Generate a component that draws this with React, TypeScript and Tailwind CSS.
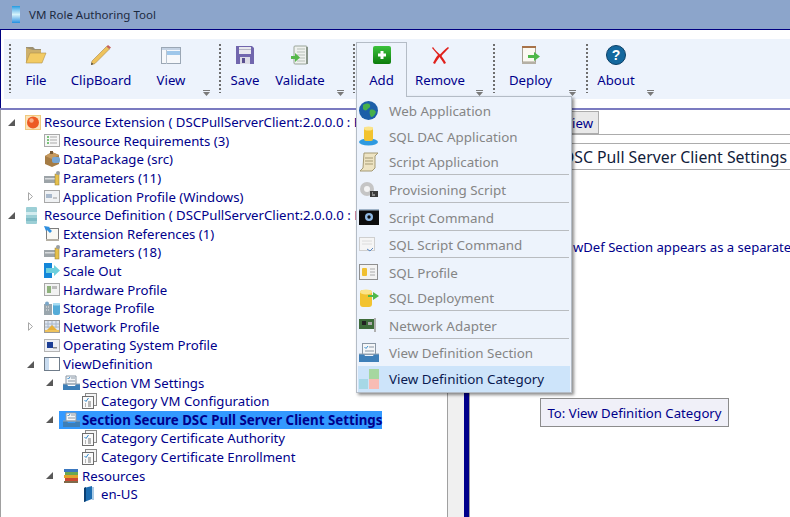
import React from "react";

const F = "font-['Noto_Sans','Open_Sans',sans-serif]";

function Grip() {
  return (
    <div className="w-[2px] h-[49px] mx-[1px] shrink-0 bg-[repeating-linear-gradient(to_bottom,#6e6e6e_0,#6e6e6e_2px,transparent_2px,transparent_4px)]" />
  );
}

function Overflow({ left }: { left: string }) {
  return (
    <svg width="9" height="6" viewBox="0 0 9 6" className={`absolute bottom-[3px] ${left}`}>
      <rect x="1" y="0" width="7" height="1" fill="#7a7a7a" />
      <path d="M1 2h7L4.500 6z" fill="#7a7a7a" />
    </svg>
  );
}

const icons: Record<string, React.ReactNode> = {
  folder: (
    <svg width="22" height="18" viewBox="0 0 22 18">
      <path d="M1 1h7l2 2h6v4H1z" fill="#9c9072" />
      <path d="M1 2v14h15V4H8z" fill="#cdb06c" />
      <path d="M5 7h16l-4 10H1z" fill="#f3cb63" stroke="#b0914c" strokeWidth=".6" />
    </svg>
  ),
  pencil: (
    <svg width="20" height="20" viewBox="0 0 20 20">
      <path d="M0 20l1-4L15.500 1.500 18.500 4 4 18.500z" fill="#eec25c" stroke="#a98a4a" strokeWidth=".6" />
      <path d="M15.500 1.500L17 0l3 2.500L18.500 4z" fill="#c5615c" />
      <path d="M0 20l.6-2.500 1.800 1.600z" fill="#444" />
    </svg>
  ),
  view: (
    <svg width="20" height="17" viewBox="0 0 20 17">
      <rect x=".5" y=".5" width="19" height="16" fill="#f6f8fb" stroke="#9ba7b5" />
      <rect x="1" y="1" width="18" height="2" fill="#c4d2e4" />
      <rect x="6" y="4" width="13" height="4" fill="#9fc7ea" />
      <path d="M5.500 3v14" stroke="#b9c4d0" />
    </svg>
  ),
  save: (
    <svg width="18" height="18" viewBox="0 0 18 18">
      <path d="M0 0h16l2 2v16H0z" fill="#7166ad" />
      <rect x="3" y="1" width="12" height="7" fill="#e8e8ee" />
      <rect x="3" y="3" width="12" height="1" fill="#b5b5c5" />
      <rect x="4" y="11" width="10" height="7" fill="#dcdce6" />
      <rect x="6" y="12" width="3" height="5" fill="#5a5090" />
    </svg>
  ),
  validate: (
    <svg width="18" height="20" viewBox="0 0 18 20">
      <rect x="3" y="1" width="13" height="18" rx="1" fill="#eef1ee" stroke="#9aa59a" />
      <path d="M6 4h8M6 7h8M6 10h8M6 13h8M6 16h8" stroke="#b7bfb7" />
      <path d="M16 2v17" stroke="#8a968a" strokeWidth="2" />
      <path d="M0 11h4V8l5 4.500L4 17v-3H0z" fill="#55b84a" />
    </svg>
  ),
  add: (
    <svg width="18" height="18" viewBox="0 0 18 18">
      <defs>
        <linearGradient id="ga" x1="0" y1="0" x2="0" y2="1">
          <stop offset="0" stopColor="#3cc23c" />
          <stop offset="1" stopColor="#0c7c0c" />
        </linearGradient>
      </defs>
      <rect width="18" height="18" rx="2" fill="url(#ga)" />
      <path d="M7.500 5h3v2.500H13v3h-2.500V13h-3v-2.500H5v-3h2.500z" fill="#fff" />
    </svg>
  ),
  remove: (
    <svg width="17" height="17" viewBox="0 0 17 17">
      <path d="M1 0c2 3 5 6 7 7.500C10 5.500 13 2 16 0l1 1c-3 3-6 6-7.500 8 1.500 2 3.500 5 4.500 7l-2 1C11 15 9 12 7.500 10 6 12 4 15 3 17l-2-1c1-2 3-6 5-8C4 6 2 3 0 1z" fill="#e0211c" />
    </svg>
  ),
  deploy: (
    <svg width="18" height="18" viewBox="0 0 18 18">
      <rect x=".5" y="1" width="13" height="15" fill="#fbf9f2" stroke="#a59f90" />
      <rect x="0" y="0" width="14" height="2" fill="#a8734a" />
      <rect x="0" y="16" width="14" height="2" fill="#b5b0a5" />
      <path d="M6 9h6V6l6 4.500L12 15v-3H6z" fill="#4fb84a" />
    </svg>
  ),
  about: (
    <svg width="20" height="20" viewBox="0 0 20 20">
      <circle cx="10" cy="10" r="9.500" fill="#14689e" stroke="#0b3f66" />
      <text x="10" y="15" textAnchor="middle" fontSize="14" fontWeight="700" fill="#fff" fontFamily="Liberation Sans">?</text>
    </svg>
  ),
};

function ToolButton({ label, icon, w, active }: { label: string; icon: string; w: string; active?: boolean }) {
  return (
    <div className={`${w} shrink-0 flex flex-col items-center ${active ? "bg-[#edf3fc] border border-b-0 border-[#b4bcc6] relative z-30 h-[55px] -mt-[2px] pt-[1px]" : ""}`}>
      <div className="h-[22px] flex items-center justify-center">{icons[icon]}</div>
      <span className="text-[13.200px] leading-[20px] mt-[4px] text-[#00008b]">{label}</span>
    </div>
  );
}

function Arrow({ open }: { open?: boolean }) {
  return open ? (
    <svg width="7" height="7" viewBox="0 0 7 7"><path d="M7 0v7H0z" fill="#595959" /></svg>
  ) : (
    <svg width="7" height="9" viewBox="0 0 7 9"><path d="M1.500.7l4 3.800-4 3.800z" fill="#fff" stroke="#a6a6a6" /></svg>
  );
}

const Ico = {
  ball: (
    <svg width="17" height="15" viewBox="0 0 17 15">
      <rect x=".5" y=".5" width="15" height="14" fill="#fbe3b8" stroke="#f0c97e" />
      <circle cx="8" cy="7.500" r="6" fill="#ed5a22" />
      <circle cx="6.500" cy="5.500" r="2.200" fill="#f9ad86" />
    </svg>
  ),
  list: (
    <svg width="16" height="13" viewBox="0 0 16 13">
      <rect x=".5" y=".5" width="15" height="12" fill="#f6f6f6" stroke="#a9a9a9" />
      <path d="M3 3h2M3 6h2M3 9h2" stroke="#52b152" strokeWidth="1.300" />
      <path d="M6 3h7M6 6h7M6 9h7" stroke="#a9a9a9" />
    </svg>
  ),
  pkg: (
    <svg width="17" height="16" viewBox="0 0 17 16">
      <path d="M1 5l7-4 7 3v9l-7 3-7-3z" fill="#a57c45" />
      <path d="M1 5l7 3 7-4-7-3z" fill="#c69a5f" />
      <rect x="8" y="6" width="8" height="6" rx="2" fill="#77a7d6" />
      <path d="M6 0h3v3H6z" fill="#7a5a34" />
    </svg>
  ),
  params: (
    <svg width="17" height="15" viewBox="0 0 17 15">
      <rect x="0" y="5" width="12" height="7" fill="#9da4a8" />
      <rect x="1" y="7" width="10" height="1.500" fill="#d9dcde" />
      <rect x="11" y="3" width="4" height="11" fill="#e6c14c" stroke="#8f7a30" strokeWidth=".5" />
      <circle cx="14" cy="2" r="2" fill="#9aa0a4" />
    </svg>
  ),
  app: (
    <svg width="16" height="13" viewBox="0 0 16 13">
      <rect x=".5" y=".5" width="15" height="12" fill="#f0f2f4" stroke="#a8a8a8" />
      <rect x="2" y="4" width="6" height="4" fill="#a9b9cc" />
      <path d="M9 8h4" stroke="#9a9a9a" />
    </svg>
  ),
  def: (
    <svg width="13" height="19" viewBox="0 0 13 19">
      <rect x="1" y="1" width="11" height="17" rx="1" fill="#9ccfd6" />
      <rect x="1" y="6" width="11" height="3" fill="#d3ecef" />
      <rect x="1" y="12" width="11" height="3" fill="#7fbcc6" />
    </svg>
  ),
  ext: (
    <svg width="16" height="15" viewBox="0 0 16 15">
      <rect x="2.500" y="2.500" width="12" height="12" fill="#f9f8f3" stroke="#7d7d7d" />
      <rect x="2" y="13" width="13" height="2" fill="#b5b0a5" />
      <path d="M0 0l6 1-1 1 3 3-2 2-3-3-1 1z" fill="#2f8fdf" />
    </svg>
  ),
  scale: (
    <svg width="16" height="16" viewBox="0 0 16 16">
      <rect x="0" y="0" width="8" height="15" fill="#1487d9" />
      <path d="M2 5h8V2l6 5.500-6 5.500V10H2z" fill="#6fd0dd" />
    </svg>
  ),
  hw: (
    <svg width="16" height="13" viewBox="0 0 16 13">
      <rect x=".5" y=".5" width="15" height="12" fill="#f2f2f2" stroke="#a8a8a8" />
      <rect x="3" y="3" width="4" height="7" fill="#8eb27c" />
      <rect x="8" y="3" width="5" height="3" fill="#bbb" />
    </svg>
  ),
  storage: (
    <svg width="16" height="15" viewBox="0 0 16 15">
      <rect x="0" y="3" width="8" height="11" fill="#9aa6ad" />
      <circle cx="3" cy="2.500" r="2" fill="#7aa7c9" />
      <path d="M2 6h4M2 9h4" stroke="#eee" strokeDasharray="1 1" />
      <rect x="9" y="2" width="7" height="12" rx="2" fill="#55acd8" />
      <rect x="9" y="2" width="7" height="2.500" rx="1" fill="#a6dcf2" />
    </svg>
  ),
  net: (
    <svg width="16" height="13" viewBox="0 0 16 13">
      <rect x=".5" y=".5" width="15" height="12" fill="#dfe6f0" stroke="#9a9a9a" />
      <path d="M1 4h14M1 7h14M4 1v7M8 1v7M12 1v7" stroke="#a8b6c8" />
      <path d="M3 10l5-5 5 5z" fill="#e6b03a" />
      <rect x="1" y="10" width="14" height="2" fill="#eec25c" />
    </svg>
  ),
  os: (
    <svg width="16" height="13" viewBox="0 0 16 13">
      <rect x=".5" y=".5" width="15" height="12" fill="#eef0f4" stroke="#b5b5b5" />
      <rect x="3" y="3" width="6" height="6" fill="#1d3f96" />
      <rect x="9" y="8" width="4" height="1.500" fill="#888" />
    </svg>
  ),
  vd: (
    <svg width="16" height="15" viewBox="0 0 16 15">
      <rect x=".5" y=".5" width="15" height="13" fill="#fff" stroke="#6f7c8a" />
      <rect x="1" y="1" width="4" height="12" fill="#c9dcf0" />
    </svg>
  ),
  section: (
    <svg width="17" height="16" viewBox="0 0 17 16">
      <path d="M3 1h10v8H3z" fill="#f4f6f8" stroke="#8a97a5" />
      <path d="M4.500 3l1 1 1.500-2" stroke="#3a8fd0" fill="none" />
      <path d="M8 3h4M5 6h7" stroke="#8a97a5" />
      <path d="M0 9h4l1 2h7l1-2h4v6H0z" fill="#3e7fb8" />
      <path d="M0 9h17" stroke="#96a6b5" />
    </svg>
  ),
  cat: (
    <svg width="16" height="16" viewBox="0 0 16 16">
      <rect x="3.500" y=".5" width="11" height="12" fill="#f4f4f4" stroke="#8a8a8a" />
      <rect x=".5" y="3.500" width="11" height="12" fill="#fafafa" stroke="#6d6d6d" />
      <path d="M2.500 7l1.500 1.500L6.500 5" stroke="#2e86c8" fill="none" />
      <path d="M3 11h1M3 13h1M6 9h3M6 11h3M6 13h3" stroke="#777" />
    </svg>
  ),
  books: (
    <svg width="16" height="16" viewBox="0 0 16 16">
      <rect x="1" y="1" width="14" height="3" fill="#3b78bf" />
      <rect x="2" y="4" width="13" height="3" fill="#6aa84f" />
      <rect x="1" y="7" width="14" height="3" fill="#e2a32c" />
      <rect x="2" y="10" width="13" height="3" fill="#cc4a32" />
      <rect x="1" y="13" width="14" height="2" fill="#7e6a4a" />
    </svg>
  ),
  book: (
    <svg width="14" height="16" viewBox="0 0 14 16">
      <path d="M2 2l8-2v13l-8 3z" fill="#1c6cb0" />
      <path d="M2 2l2-1v14l-2 1z" fill="#0b3f72" />
      <path d="M10 1h2v13h-2z" fill="#a9cbe6" />
    </svg>
  ),
  globe: (
    <svg width="19" height="19" viewBox="0 0 19 19">
      <circle cx="9.500" cy="9.500" r="9.500" fill="#1d5fa8" />
      <path d="M4 4c3-2 6-2 7 0 1 3-2 3-3 5-2 1-3 0-4-1zM11 9c3-1 5 0 6 2-1 3-3 5-5 5-1-2-2-4-1-7z" fill="#47b04a" />
    </svg>
  ),
  dac: (
    <svg width="20" height="20" viewBox="0 0 20 20">
      <ellipse cx="9.500" cy="16" rx="9.500" ry="3.500" fill="#2e9ae0" />
      <rect x="5" y="1" width="9" height="14" rx="2" fill="#f2c330" />
      <ellipse cx="9.500" cy="2.500" rx="4.500" ry="2" fill="#fbe48a" />
    </svg>
  ),
  script: (
    <svg width="20" height="20" viewBox="0 0 20 20">
      <path d="M5 1h14l-3 3v12l-3 3H1l3-3z" fill="#eee4c3" stroke="#a59a74" />
      <path d="M6 6h8M6 9h8M6 12h8" stroke="#a59a74" />
    </svg>
  ),
  prov: (
    <svg width="19" height="17" viewBox="0 0 19 17">
      <circle cx="8" cy="8" r="7" fill="#c5c5c5" />
      <circle cx="8" cy="8" r="3" fill="#f4f4f4" />
      <rect x="11" y="10" width="8" height="6" fill="#3a3a3a" />
      <path d="M13 12h1M13 14h3" stroke="#ddd" />
    </svg>
  ),
  cmd: (
    <svg width="20" height="16" viewBox="0 0 20 16">
      <rect width="20" height="16" fill="#0c0c0c" />
      <rect width="20" height="1.500" fill="#9fb3c8" />
      <circle cx="10" cy="8" r="4" fill="#8fb8e2" />
      <circle cx="10" cy="8" r="1.700" fill="#0c0c0c" />
    </svg>
  ),
  sqlcmd: (
    <svg width="17" height="16" viewBox="0 0 17 16">
      <rect x=".5" y=".5" width="15" height="13" fill="#f5f5f5" stroke="#cfcfcf" />
      <path d="M3 4h10M3 7h10" stroke="#dcdcdc" />
      <path d="M8 12l3 2 3-3" stroke="#5b87c0" fill="none" />
    </svg>
  ),
  sqlprof: (
    <svg width="19" height="16" viewBox="0 0 19 16">
      <rect x=".5" y=".5" width="18" height="15" fill="#f3f3f3" stroke="#8f8f8f" />
      <rect x="3" y="4" width="5" height="8" rx="1" fill="#f0c030" />
      <path d="M11 5h5M11 8h5M11 11h5" stroke="#aaa" />
    </svg>
  ),
  sqldep: (
    <svg width="20" height="19" viewBox="0 0 20 19">
      <rect x="1" y="1" width="12" height="17" rx="3" fill="#f2c330" />
      <ellipse cx="7" cy="3" rx="6" ry="2.500" fill="#fbe48a" />
      <path d="M9 6h5V3l6 4-6 4V8H9z" fill="#4fb84a" />
    </svg>
  ),
  nic: (
    <svg width="18" height="14" viewBox="0 0 18 14">
      <rect x="0" y="1" width="15" height="10" fill="#3d6b3a" />
      <rect x="3" y="3" width="4" height="4" fill="#222" />
      <rect x="9" y="4" width="4" height="3" fill="#aaa" />
      <rect x="15" y="0" width="2" height="14" fill="#b0b0b0" />
    </svg>
  ),
  vds: (
    <svg width="20" height="20" viewBox="0 0 20 20">
      <rect x="3.500" y=".5" width="13" height="11" fill="#f4f6f8" stroke="#8a97a5" />
      <path d="M5.500 4l1.500 1.500L9 3" stroke="#3a8fd0" fill="none" />
      <path d="M10 4h5M6 8h9" stroke="#8a97a5" />
      <path d="M0 11h5l1 2h8l1-2h5v8H0z" fill="#3e7fb8" />
      <path d="M0 11h20" stroke="#96a6b5" />
    </svg>
  ),
  vdc: (
    <svg width="20" height="20" viewBox="0 0 20 20">
      <rect x="10" y="0" width="10" height="10" fill="#a6d7a0" />
      <rect x="0" y="10" width="9" height="10" fill="#a6d8e6" />
      <rect x="10" y="10" width="10" height="10" fill="#f8bcb4" />
    </svg>
  ),
};

type Row = { d: number; icon: keyof typeof Ico; label: string; arrow?: "open" | "closed"; sel?: boolean };

const rows: Row[] = [
  { d: 0, icon: "ball", label: "Resource Extension ( DSCPullServerClient:2.0.0.0 : Bin", arrow: "open" },
  { d: 1, icon: "list", label: "Resource Requirements (3)" },
  { d: 1, icon: "pkg", label: "DataPackage (src)" },
  { d: 1, icon: "params", label: "Parameters (11)" },
  { d: 1, icon: "app", label: "Application Profile (Windows)", arrow: "closed" },
  { d: 0, icon: "def", label: "Resource Definition ( DSCPullServerClient:2.0.0.0 : Bin", arrow: "open" },
  { d: 1, icon: "ext", label: "Extension References (1)" },
  { d: 1, icon: "params", label: "Parameters (18)" },
  { d: 1, icon: "scale", label: "Scale Out" },
  { d: 1, icon: "hw", label: "Hardware Profile" },
  { d: 1, icon: "storage", label: "Storage Profile" },
  { d: 1, icon: "net", label: "Network Profile", arrow: "closed" },
  { d: 1, icon: "os", label: "Operating System Profile" },
  { d: 1, icon: "vd", label: "ViewDefinition", arrow: "open" },
  { d: 2, icon: "section", label: "Section VM Settings", arrow: "open" },
  { d: 3, icon: "cat", label: "Category VM Configuration" },
  { d: 2, icon: "section", label: "Section Secure DSC Pull Server Client Settings", arrow: "open", sel: true },
  { d: 3, icon: "cat", label: "Category Certificate Authority" },
  { d: 3, icon: "cat", label: "Category Certificate Enrollment" },
  { d: 2, icon: "books", label: "Resources", arrow: "open" },
  { d: 3, icon: "book", label: "en-US" },
];

const pad = ["pl-[7px]", "pl-[26px]", "pl-[45px]", "pl-[64px]"];

function TreeRow({ r }: { r: Row }) {
  return (
    <div className={`h-[18.600px] flex items-center whitespace-nowrap ${pad[r.d]}`}>
      <span className="w-[13px] shrink-0 flex items-center justify-start">
        {r.arrow === "open" && <Arrow open />}
        {r.arrow === "closed" && <Arrow />}
      </span>
      <span className={`flex items-center ${r.sel ? "bg-[#3399ff]" : ""}`}>
        <span className="w-[23px] h-[18px] shrink-0 flex items-center justify-start pl-[4px]">{Ico[r.icon]}</span>
        <span className={`leading-[18px] text-[#00008b] ${r.sel ? "font-bold text-[13.300px]" : "text-[13.200px]"}`}>{r.label}</span>
      </span>
    </div>
  );
}

type Item = { icon: keyof typeof Ico; label: string; h: number; sep?: boolean; hot?: boolean; low?: boolean };
const items: Item[] = [
  { icon: "globe", label: "Web Application", h: 26, low: true },
  { icon: "dac", label: "SQL DAC Application", h: 26, low: true },
  { icon: "script", label: "Script Application", h: 26, sep: true },
  { icon: "prov", label: "Provisioning Script", h: 28, sep: true, low: true },
  { icon: "cmd", label: "Script Command", h: 28, sep: true, low: true },
  { icon: "sqlcmd", label: "SQL Script Command", h: 27, sep: true, low: true },
  { icon: "sqlprof", label: "SQL Profile", h: 28, low: true },
  { icon: "sqldep", label: "SQL Deployment", h: 25, sep: true },
  { icon: "nic", label: "Network Adapter", h: 28, sep: true, low: true },
  { icon: "vds", label: "View Definition Section", h: 27, low: true },
  { icon: "vdc", label: "View Definition Category", h: 26, hot: true },
];

function Menu() {
  return (
    <div className="absolute left-[356px] top-[96px] z-20 w-[216px] h-[297px] bg-[#edf3fc] border border-[#b4bcc6] shadow-[2px_2px_3px_rgba(0,0,0,0.45)] px-[1px]">
      {items.map((it) => (
        <div key={it.label} className={`relative flex items-center ${it.hot ? "bg-[#cde4fa]" : ""}`} style={{ height: it.h }}>
          <span className="w-[31px] pl-[1px] shrink-0 flex items-center justify-start">{Ico[it.icon]}</span>
          <span className={`text-[13.400px] whitespace-nowrap ${it.low ? "pt-[2px]" : ""} ${it.hot ? "text-[#0a1a50]" : "text-[#858585]"}`}>{it.label}</span>
          {it.sep && <span className="absolute left-[31px] right-[1px] bottom-[0px] h-[1px] bg-[#b9bcc0]" />}
        </div>
      ))}
    </div>
  );
}

export default function App() {
  return (
    <div className={`relative w-[790px] h-[517px] overflow-hidden bg-white flex flex-col ${F}`}>
      <div className="h-[29px] shrink-0 bg-[#8ca5cb] flex items-center pl-[12px] gap-[9px]">
        <div className="w-[8px] h-[17px] bg-gradient-to-b from-[#1a9be0] via-[#d5f3fb] to-[#1a8fe0]" />
        <span className="text-[11.500px] text-[#1c2a3f]">VM Role Authoring Tool</span>
      </div>
      <div className="shrink-0 border-t border-l border-[#000080] h-[79px] flex flex-col">
        <div className="h-[9px] shrink-0" />
        <div className="h-[60px] shrink-0 ml-[3px] bg-[#edf3fc] flex pt-[5px] pl-[4px]">
          <Grip />
          <ToolButton label="File" icon="folder" w="w-[48px]" />
          <ToolButton label="ClipBoard" icon="pencil" w="w-[82px]" />
          <ToolButton label="View" icon="view" w="w-[58px]" />
          <div className="w-[18px] shrink-0 relative"><Overflow left="left-[2px]" /></div>
          <Grip />
          <ToolButton label="Save" icon="save" w="w-[46px]" />
          <ToolButton label="Validate" icon="validate" w="w-[64px]" />
          <div className="w-[20px] shrink-0 relative"><Overflow left="left-[4px]" /></div>
          <Grip />
          <ToolButton label="Add" icon="add" w="w-[51px]" active />
          <ToolButton label="Remove" icon="remove" w="w-[66px]" />
          <div className="w-[19px] shrink-0 relative"><Overflow left="left-[2px]" /></div>
          <Grip />
          <ToolButton label="Deploy" icon="deploy" w="w-[69px]" />
          <div className="w-[20px] shrink-0 relative"><Overflow left="left-[3px]" /></div>
          <Grip />
          <ToolButton label="About" icon="about" w="w-[54px]" />
          <div className="w-[20px] shrink-0 relative"><Overflow left="left-[3px]" /></div>
        </div>
      </div>
      <div className="flex-1 flex border-t-2 border-[#7b7bc0] min-h-0">
        <div className="w-[447px] shrink-0 overflow-hidden pt-[3px] border-l border-[#a0a0a0]">
          {rows.map((r) => (
            <TreeRow key={r.label} r={r} />
          ))}
        </div>
        <div className="w-[17px] shrink-0 bg-[#f0f0f0] border-l border-[#a0a0a0]" />
        <div className="w-[5px] shrink-0 bg-[#00008b]" />
        <div className="w-[1px] shrink-0 bg-[#a0a0a0]" />
        <div className="flex-1 min-w-0 overflow-hidden">
          <div className="h-[25px] border-b border-[#acacac] flex items-end pl-[69px]">
            <div className="h-[23px] w-[60px] bg-[#e9e9e9] border border-[#acacac] text-[13.200px] leading-[20px] pt-[1px] text-right pr-[5px] text-[#00008b]">View</div>
          </div>
          <div className="h-[8px]" />
          <div className="h-[27px] border-y border-[#acacac] flex items-center justify-end pr-[3px] pt-[2px] text-[15.800px] whitespace-nowrap text-[#10203a]">
            DSC Pull Server Client Settings
          </div>
          <div className="mt-[68px] text-[13.100px] whitespace-nowrap text-[#00008b] pl-[103px]">wDef Section appears as a separate</div>
        </div>
      </div>
      <Menu />
      <div className="absolute left-[540px] top-[398px] z-10 w-[189px] h-[29px] bg-[#f0f0f8] border border-[#8c8c8c] flex items-center justify-center pt-[2px] text-[13.200px] text-[#00008b] whitespace-nowrap">
        To: View Definition Category
      </div>
    </div>
  );
}
